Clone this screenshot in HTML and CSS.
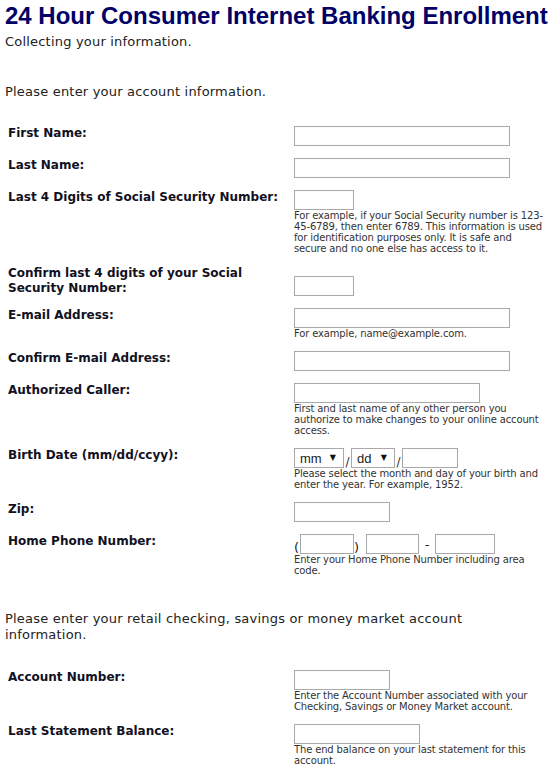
FILE: index.html
```html
<!DOCTYPE html>
<html lang="en">
<head>
<meta charset="utf-8">
<title>24 Hour Consumer Internet Banking Enrollment</title>
<link rel="stylesheet" href="styles.css">
</head>
<body>
<div class="page">
  <h1 class="title">24 Hour Consumer Internet Banking Enrollment</h1>
  <p class="lead">Collecting your information.</p>
  <p class="intro">Please enter your account information.</p>

  <div class="form">
    <div class="row">
      <label class="lbl">First Name:</label>
      <div class="val"><input class="txt w-lg" type="text"></div>
    </div>
    <div class="row">
      <label class="lbl">Last Name:</label>
      <div class="val"><input class="txt w-lg" type="text"></div>
    </div>
    <div class="row">
      <label class="lbl">Last 4 Digits of Social Security Number:</label>
      <div class="val">
        <input class="txt w-sm" type="text">
        <div class="help">For example, if your Social Security number is 123-45-6789, then enter 6789. This information is used for identification purposes only. It is safe and secure and no one else has access to it.</div>
      </div>
    </div>
    <div class="row">
      <label class="lbl lbl-narrow">Confirm last 4 digits of your Social Security Number:</label>
      <div class="val val-low"><input class="txt w-sm" type="text"></div>
    </div>
    <div class="row">
      <label class="lbl">E-mail Address:</label>
      <div class="val">
        <input class="txt w-lg" type="text">
        <div class="help">For example, name@example.com.</div>
      </div>
    </div>
    <div class="row">
      <label class="lbl">Confirm E-mail Address:</label>
      <div class="val"><input class="txt w-lg" type="text"></div>
    </div>
    <div class="row">
      <label class="lbl">Authorized Caller:</label>
      <div class="val">
        <input class="txt w-md" type="text">
        <div class="help">First and last name of any other person you authorize to make changes to your online account access.</div>
      </div>
    </div>
    <div class="row">
      <label class="lbl">Birth Date (mm/dd/ccyy):</label>
      <div class="val">
        <div class="combo">
          <span class="sel sel-mm"><select><option>mm</option></select></span>
          <span class="sep">/</span>
          <span class="sel sel-dd"><select><option>dd</option></select></span>
          <span class="sep">/</span>
          <input class="txt w-yr" type="text">
        </div>
        <div class="help">Please select the month and day of your birth and enter the year. For example, 1952.</div>
      </div>
    </div>
    <div class="row">
      <label class="lbl">Zip:</label>
      <div class="val"><input class="txt w-zip" type="text"></div>
    </div>
    <div class="row">
      <label class="lbl">Home Phone Number:</label>
      <div class="val">
        <div class="combo">
          <span class="pl">(</span>
          <input class="txt w-ac" type="text">
          <span class="pr">)</span>
          <input class="txt w-ex" type="text">
          <span class="dash">-</span>
          <input class="txt w-num" type="text">
        </div>
        <div class="help">Enter your Home Phone Number including area code.</div>
      </div>
    </div>
  </div>

  <p class="intro intro-2">Please enter your retail checking, savings or money market account information.</p>

  <div class="form">
    <div class="row">
      <label class="lbl">Account Number:</label>
      <div class="val">
        <input class="txt w-zip" type="text">
        <div class="help">Enter the Account Number associated with your Checking, Savings or Money Market account.</div>
      </div>
    </div>
    <div class="row">
      <label class="lbl">Last Statement Balance:</label>
      <div class="val">
        <input class="txt w-bal" type="text">
        <div class="help">The end balance on your last statement for this account.</div>
      </div>
    </div>
  </div>
</div>
</body>
</html>
```

FILE: styles.css
```css
html, body {
  margin: 0;
  padding: 0;
  background: #ffffff;
}

.page {
  padding: 0 0 0 5px;
  font-family: "DejaVu Sans", Verdana, sans-serif;
  color: #222222;
}

.title {
  margin: 2px 0 0 0;
  font-family: "Liberation Sans", Arial, sans-serif;
  font-weight: bold;
  font-size: 24px;
  line-height: 28px;
  color: #000066;
  white-space: nowrap;
}

.lead {
  margin: 4px 0 0 0;
  font-size: 13px;
  line-height: 16px;
  letter-spacing: 0.2px;
}

.intro {
  margin: 34px 0 0 0;
  font-size: 13px;
  line-height: 16px;
  letter-spacing: 0.2px;
  max-width: 480px;
}

.intro-2 {
  margin-top: 24px;
}

.form {
  margin-top: 25px;
  padding-left: 3px;
}

.intro-2 + .form {
  margin-top: 26px;
}

.row {
  display: flex;
  align-items: flex-start;
  padding-bottom: 11px;
}

.lbl {
  flex: 0 0 286px;
  width: 286px;
  font-weight: bold;
  font-size: 12px;
  line-height: 15px;
  color: #111122;
  padding-top: 1px;
  box-sizing: border-box;
}

.lbl-narrow {
  padding-right: 40px;
}

.val {
  width: 252px;
  padding-top: 1px;
}

.val-low {
  padding-top: 11px;
}

.txt {
  display: block;
  box-sizing: border-box;
  height: 20px;
  margin: 0;
  padding: 0 2px;
  border: 1px solid #a9a9a9;
  background: #ffffff;
  font: 13px "Liberation Sans", Arial, sans-serif;
}

.w-lg { width: 216px; }
.w-md { width: 186px; }
.w-sm { width: 60px; }
.w-zip { width: 96px; }
.w-bal { width: 126px; }
.w-yr { width: 56px; }
.w-ac { width: 54px; }
.w-ex { width: 53px; }
.w-num { width: 60px; }

.help {
  font-size: 10px;
  line-height: 11px;
  letter-spacing: -0.15px;
  color: #333333;
}

.combo {
  display: flex;
  align-items: flex-end;
  height: 20px;
}

.sel {
  position: relative;
  display: block;
  height: 20px;
}

.sel select {
  -webkit-appearance: none;
  appearance: none;
  display: block;
  box-sizing: border-box;
  width: 100%;
  height: 20px;
  margin: 0;
  padding: 0 0 0 5px;
  border: 1px solid #a9a9a9;
  border-radius: 0;
  background: #ffffff;
  color: #222222;
  font: 13px "Liberation Sans", Arial, sans-serif;
}

.sel::after {
  content: "\25BC";
  position: absolute;
  right: 8px;
  top: 5px;
  font-size: 8px;
  line-height: 10px;
  color: #111111;
  pointer-events: none;
  font-family: "DejaVu Sans", sans-serif;
}

.sel-mm { width: 50px; }
.sel-dd { width: 44px; }

.sep {
  width: 7px;
  text-align: center;
  font-size: 12px;
  line-height: 13px;
  color: #333333;
  margin-bottom: -1px;
}

.pl, .pr, .dash {
  font-size: 13px;
  line-height: 14px;
  color: #222222;
  margin-bottom: -1px;
}

.pl {
  width: 6px;
  text-align: left;
}

.pr {
  width: 5px;
  margin-right: 7px;
  text-align: left;
}

.dash {
  width: 16px;
  text-align: center;
  margin-bottom: 2px;
}
```
